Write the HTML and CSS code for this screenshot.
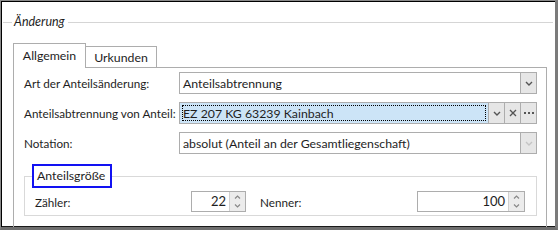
FILE: index.html
```html
<!DOCTYPE html>
<html lang="de">
<head>
<meta charset="utf-8">
<link rel="stylesheet" href="styles.css">
</head>
<body>
<div class="frame">
  <fieldset class="group">
    <legend class="group-title">Änderung</legend>
    <div class="tabs">
      <div class="tab active">Allgemein</div>
      <div class="tab">Urkunden</div>
    </div>
    <div class="panel">
      <div class="form">
        <div class="label">Art der Anteilsänderung:</div>
        <div class="combo">
          <div class="value">Anteilsabtrennung</div>
          <div class="btn"><svg width="8" height="5" viewBox="0 0 8 5"><path d="M1 1 L4 4 L7 1" fill="none" stroke="#555" stroke-width="1.4"/></svg></div>
        </div>

        <div class="label">Anteilsabtrennung von Anteil:</div>
        <div class="combo">
          <div class="value selected"><span class="focus">EZ 207 KG 63239 Kainbach</span></div>
          <div class="btn"><svg width="8" height="5" viewBox="0 0 8 5"><path d="M1 1 L4 4 L7 1" fill="none" stroke="#555" stroke-width="1.4"/></svg></div>
          <div class="btn"><svg width="8" height="8" viewBox="0 0 8 8"><path d="M1 1 L7 7 M7 1 L1 7" fill="none" stroke="#555" stroke-width="1.3"/></svg></div>
          <div class="btn"><svg width="10" height="3" viewBox="0 0 10 3"><rect x="0" y="0" width="2" height="2" fill="#555"/><rect x="4" y="0" width="2" height="2" fill="#555"/><rect x="8" y="0" width="2" height="2" fill="#555"/></svg></div>
        </div>

        <div class="label">Notation:</div>
        <div class="combo">
          <div class="value">absolut (Anteil an der Gesamtliegenschaft)</div>
          <div class="btn"><svg width="8" height="5" viewBox="0 0 8 5"><path d="M1 1 L4 4 L7 1" fill="none" stroke="#c4c4c4" stroke-width="1.4"/></svg></div>
        </div>
      </div>

      <fieldset class="sub">
        <legend class="sub-title">Anteilsgröße</legend>
        <div class="sub-row">
          <div class="sub-label">Zähler:</div>
          <div class="spin small">
            <div class="num">22</div>
            <div class="spin-btns">
              <div class="half"><svg width="7" height="4" viewBox="0 0 7 4"><path d="M1 3.5 L3.5 1 L6 3.5" fill="none" stroke="#888" stroke-width="1.2"/></svg></div>
              <div class="half"><svg width="7" height="4" viewBox="0 0 7 4"><path d="M1 0.5 L3.5 3 L6 0.5" fill="none" stroke="#888" stroke-width="1.2"/></svg></div>
            </div>
          </div>
          <div class="sub-label second">Nenner:</div>
          <div class="spin large">
            <div class="num">100</div>
            <div class="spin-btns">
              <div class="half"><svg width="7" height="4" viewBox="0 0 7 4"><path d="M1 3.5 L3.5 1 L6 3.5" fill="none" stroke="#888" stroke-width="1.2"/></svg></div>
              <div class="half"><svg width="7" height="4" viewBox="0 0 7 4"><path d="M1 0.5 L3.5 3 L6 0.5" fill="none" stroke="#888" stroke-width="1.2"/></svg></div>
            </div>
          </div>
        </div>
      </fieldset>
    </div>
  </fieldset>
</div>
</body>
</html>
```

FILE: styles.css
```css
html, body {
  margin: 0;
  padding: 0;
  background: #fff;
}
body {
  font-family: "Lato", "Open Sans", sans-serif;
  font-size: 11.7px;
  color: #1e1e1e;
}
.frame {
  width: 558px;
  height: 230px;
  box-sizing: border-box;
  overflow: hidden;
  border-style: solid;
  border-width: 1px 3px 3px 1px;
  border-color: #8a8a8a #7b7b7b #6e6e6e #8a8a8a;
  box-shadow: inset 1px 1px 0 #000, inset 0 -1px 0 #1a1a1a;
  padding: 13px 2px 0 2px;
  background: #fff;
}
.group {
  margin: 0;
  border: none;
  border-top: 1px solid #d5d5d5;
  padding: 13px 6px 0 0;
  min-width: 0;
}
.group-title {
  margin-left: 9px;
  padding: 0 3px 0 2px;
  line-height: 16px;
  font-style: italic;
  font-size: 12.5px;
}
.tabs {
  display: flex;
  align-items: flex-end;
  height: 24px;
  margin-left: 10px;
}
.tab {
  box-sizing: border-box;
  border: 1px solid #adadad;
  border-bottom: none;
  background: #fff;
  display: flex;
  align-items: center;
  justify-content: center;
  font-size: 12.3px;
}
.tab.active {
  width: 73px;
  height: 25px;
  margin-bottom: -1px;
  position: relative;
  z-index: 1;
  padding-bottom: 2px;
}
.tab:not(.active) {
  width: 71px;
  height: 21px;
  border-left: none;
}
.panel {
  margin-left: 10px;
  border: 1px solid #adadad;
  border-bottom: none;
  padding: 4px 9px 20px 10px;
  height: 200px;
}
.form {
  display: grid;
  grid-template-columns: 155px 1fr;
  grid-auto-rows: 22px;
  row-gap: 8px;
  align-items: center;
}
.label {
  white-space: nowrap;
}
.combo {
  box-sizing: border-box;
  height: 22px;
  border: 1px solid #adadad;
  display: flex;
  background: #fff;
}
.value {
  flex: 1;
  display: flex;
  align-items: center;
  padding-left: 3px;
  white-space: nowrap;
  overflow: hidden;
  font-size: 12.3px;
}
.value.selected {
  background: #cce4f7;
  padding: 2px;
}
.focus {
  flex: 1;
  align-self: stretch;
  display: flex;
  align-items: center;
  outline: 1px dotted #000;
  outline-offset: -1px;
  padding-left: 1px;
}
.btn {
  width: 15px;
  border-left: 1px solid #adadad;
  background: #e6e6e6;
  display: flex;
  align-items: center;
  justify-content: center;
}
.sub {
  margin: 10px 0 0 0;
  padding: 3px 0 3px 0;
  border: 1px solid #d9d9d9;
  min-width: 0;
}
.sub-title {
  margin-left: 7px;
  padding: 0 5px 0 3px;
  border: 2px solid #1212f2;
  line-height: 20px;
  font-size: 12.3px;
}
.sub-row {
  display: flex;
  align-items: center;
  padding: 0 10px;
}
.sub-label {
  width: 156px;
}
.sub-label.second {
  margin-left: 14px;
  width: 157px;
}
.spin {
  box-sizing: border-box;
  height: 21px;
  border: 1px solid #adadad;
  display: flex;
}
.spin.small { width: 55px; }
.spin.large { width: 108px; }
.num {
  flex: 1;
  text-align: right;
  padding-right: 3px;
  line-height: 19px;
  font-size: 13px;
}
.spin-btns {
  width: 15px;
  border-left: 1px solid #d0d0d0;
  background: #ececec;
  display: flex;
  flex-direction: column;
}
.half {
  flex: 1;
  display: flex;
  align-items: center;
  justify-content: center;
}
```
